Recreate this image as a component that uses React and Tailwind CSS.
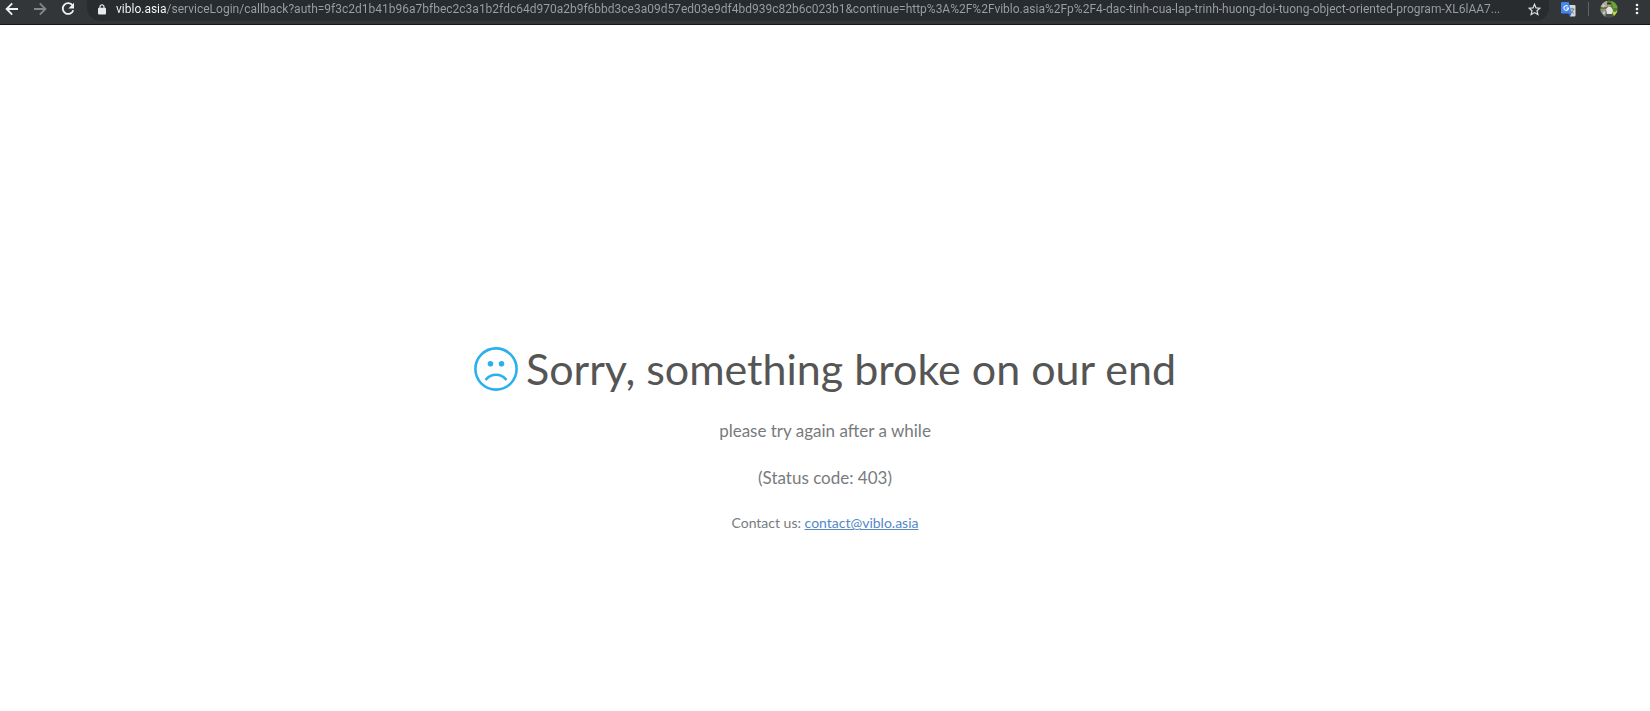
const url =
  'viblo.asia/serviceLogin/callback?auth=9f3c2d1b41b96a7bfbec2c3a1b2fdc64d970a2b9f6bbd3ce3a09d57ed03e9df4bd939c82b6c023b1&continue=http%3A%2F%2Fviblo.asia%2Fp%2F4-dac-tinh-cua-lap-trinh-huong-doi-tuong-object-oriented-program-XL6lAA7...';

function ArrowIcon({ className }) {
  return (
    <svg className={className} width="14" height="14" viewBox="0 0 14 14" fill="none" stroke="currentColor" strokeWidth="1.8" aria-hidden="true">
      <path d="M13 7H2M7.2 1.4 1.6 7l5.6 5.6" />
    </svg>
  );
}

function ReloadIcon() {
  return (
    <svg width="14" height="14" viewBox="0 0 14 14" fill="none" aria-hidden="true">
      <path d="M11.6 3.4A5.4 5.4 0 1 0 12.3 8.3" stroke="currentColor" strokeWidth="1.8" />
      <path d="M13 .8v5.6H7.4z" fill="currentColor" />
    </svg>
  );
}

function LockIcon() {
  return (
    <svg width="8" height="11" viewBox="0 0 8 11" fill="none" aria-hidden="true">
      <path d="M2 4.5V2.8a2 2 0 0 1 4 0v1.7" stroke="#e8eaed" strokeWidth="1.2" />
      <rect y="3.8" width="8" height="6.8" rx="1" fill="#e8eaed" />
    </svg>
  );
}

function StarIcon() {
  return (
    <svg width="13" height="13" viewBox="0 0 13 13" fill="none" stroke="currentColor" strokeWidth="1.2" aria-hidden="true">
      <path d="m6.5 1.3 1.5 3.6 3.9.3L9 7.8l.9 3.8-3.4-2-3.4 2L4 7.8 1.1 5.2l3.9-.3z" />
    </svg>
  );
}

function TranslateIcon() {
  return (
    <svg width="15" height="15" viewBox="0 0 15 15" fill="none" aria-hidden="true">
      <path d="M5 3h8.5a1 1 0 0 1 1 1v9.5a1 1 0 0 1-1 1H9z" fill="#d5d7da" />
      <path d="M8.6 7h4.8M11 5.8V7m1.6 0c-.4 2-1.6 3.4-3 4.4m.2-3.2c.6 1.4 1.8 2.6 3.2 3.3" stroke="#70777f" strokeWidth=".9" />
      <path d="M1 0h6.7l2.8 11.5H1a1 1 0 0 1-1-1V1a1 1 0 0 1 1-1z" fill="#4285f4" />
      <path d="m7 11.5 2 3 1.5-3z" fill="#2a56c6" />
      <path d="M6.7 4.2a2.3 2.3 0 1 0 .8 1.8H5.2" stroke="#fff" strokeWidth="1.1" />
    </svg>
  );
}

function Avatar() {
  return (
    <svg width="18" height="18" viewBox="0 0 18 18" aria-hidden="true">
      <clipPath id="avatar">
        <circle cx="9" cy="9" r="8.6" />
      </clipPath>
      <g clipPath="url(#avatar)">
        <path d="M0 0h18v18H0z" fill="#527c38" />
        <path d="M0 0h7v7H0z" fill="#b3a49d" />
        <path d="M0 9h6v9H0z" fill="#8f908a" />
        <path d="M11 0h7v8h-5z" fill="#6ba534" />
        <path d="M12 11l3 1 3-2v5l-4 1z" fill="#bdd93b" />
        <path d="M6 9l2-2h3l2 3-1 4H7z" fill="#e5e3e4" />
        <circle cx="9" cy="5.3" r="1.8" fill="#c99f86" />
        <path d="M7 4.6a2 2 0 0 1 4 0z" fill="#292b25" />
        <path d="M6 14h6l1 4H5z" fill="#474b50" />
        <path d="M2 5l2-1 1 2-2 2zM3 12l2-1v3H3z" fill="#d8c4bd" />
      </g>
    </svg>
  );
}

function SadFace() {
  return (
    <svg width="44" height="44" viewBox="0 0 44 44" fill="none" className="shrink-0" aria-hidden="true">
      <circle cx="22" cy="22" r="20.6" stroke="#29b1ef" strokeWidth="2.6" />
      <circle cx="16.5" cy="16.8" r="2.8" fill="#29b1ef" />
      <circle cx="27.5" cy="16.8" r="2.8" fill="#29b1ef" />
      <path d="M12.3 32.2c5-6 14.4-6 19.4 0" stroke="#29b1ef" strokeWidth="2.6" strokeLinecap="round" />
    </svg>
  );
}

export default function App() {
  return (
    <div className="flex min-h-screen flex-col bg-white">
      <header className="flex h-[25px] items-start border-b border-[#151618] bg-[#323639] pr-[11px] pl-[5px] text-[#f1f3f4]">
        <nav className="flex h-[18px] items-center gap-[14px]" aria-label="Browser">
          <button type="button" aria-label="Back"><ArrowIcon /></button>
          <button type="button" aria-label="Forward"><ArrowIcon className="rotate-180 text-[#85888b]" /></button>
          <button type="button" aria-label="Reload"><ReloadIcon /></button>
        </nav>
        <div className="ml-3 flex h-[21px] min-w-0 flex-1 rounded-b-[14px] bg-[#282c2f] pr-2 pl-[11px]">
          <div className="flex h-[18px] min-w-0 flex-1 items-center">
            <LockIcon />
            <input
              aria-label="Address"
              defaultValue={url}
              spellCheck={false}
              className="ml-[10px] h-[18px] min-w-0 flex-1 bg-[linear-gradient(to_right,#ffffff_50px,#9aa0a6_50px)] bg-clip-text font-['Roboto',sans-serif] text-[12px] text-ellipsis text-transparent outline-none"
            />
            <button type="button" aria-label="Bookmark" className="ml-2 text-[#dfe1e5]"><StarIcon /></button>
          </div>
        </div>
        <div className="ml-3 flex h-[18px] items-center">
          <button type="button" aria-label="Translate"><TranslateIcon /></button>
          <span className="ml-3 h-[14px] w-px bg-[#5f6368]" />
          <button type="button" aria-label="Profile" className="ml-[11px]"><Avatar /></button>
          <button type="button" aria-label="Menu" className="ml-[17px]">
            <svg width="4" height="12" viewBox="0 0 4 12" fill="currentColor" aria-hidden="true">
              <circle cx="2" cy="2" r="1.3" />
              <circle cx="2" cy="6" r="1.3" />
              <circle cx="2" cy="10" r="1.3" />
            </svg>
          </button>
        </div>
      </header>
      <main className="flex flex-1 flex-col items-center px-4 pt-[316px] text-center font-['Lato',sans-serif] text-[#777b7e]">
        <div className="flex items-center gap-2">
          <SadFace />
          <h1 className="text-[43px] leading-[56px] text-[#555555]">Sorry, something broke on our end</h1>
        </div>
        <p className="mt-[21px] text-[17px] leading-[26px]">please try again after a while</p>
        <p className="mt-[21px] text-[17px] leading-[26px]">(Status code: 403)</p>
        <p className="mt-5 text-[14px] leading-[24px]">
          Contact us: <a href="mailto:contact@viblo.asia" className="text-[#5488c7] underline">contact@viblo.asia</a>
        </p>
      </main>
    </div>
  );
}
